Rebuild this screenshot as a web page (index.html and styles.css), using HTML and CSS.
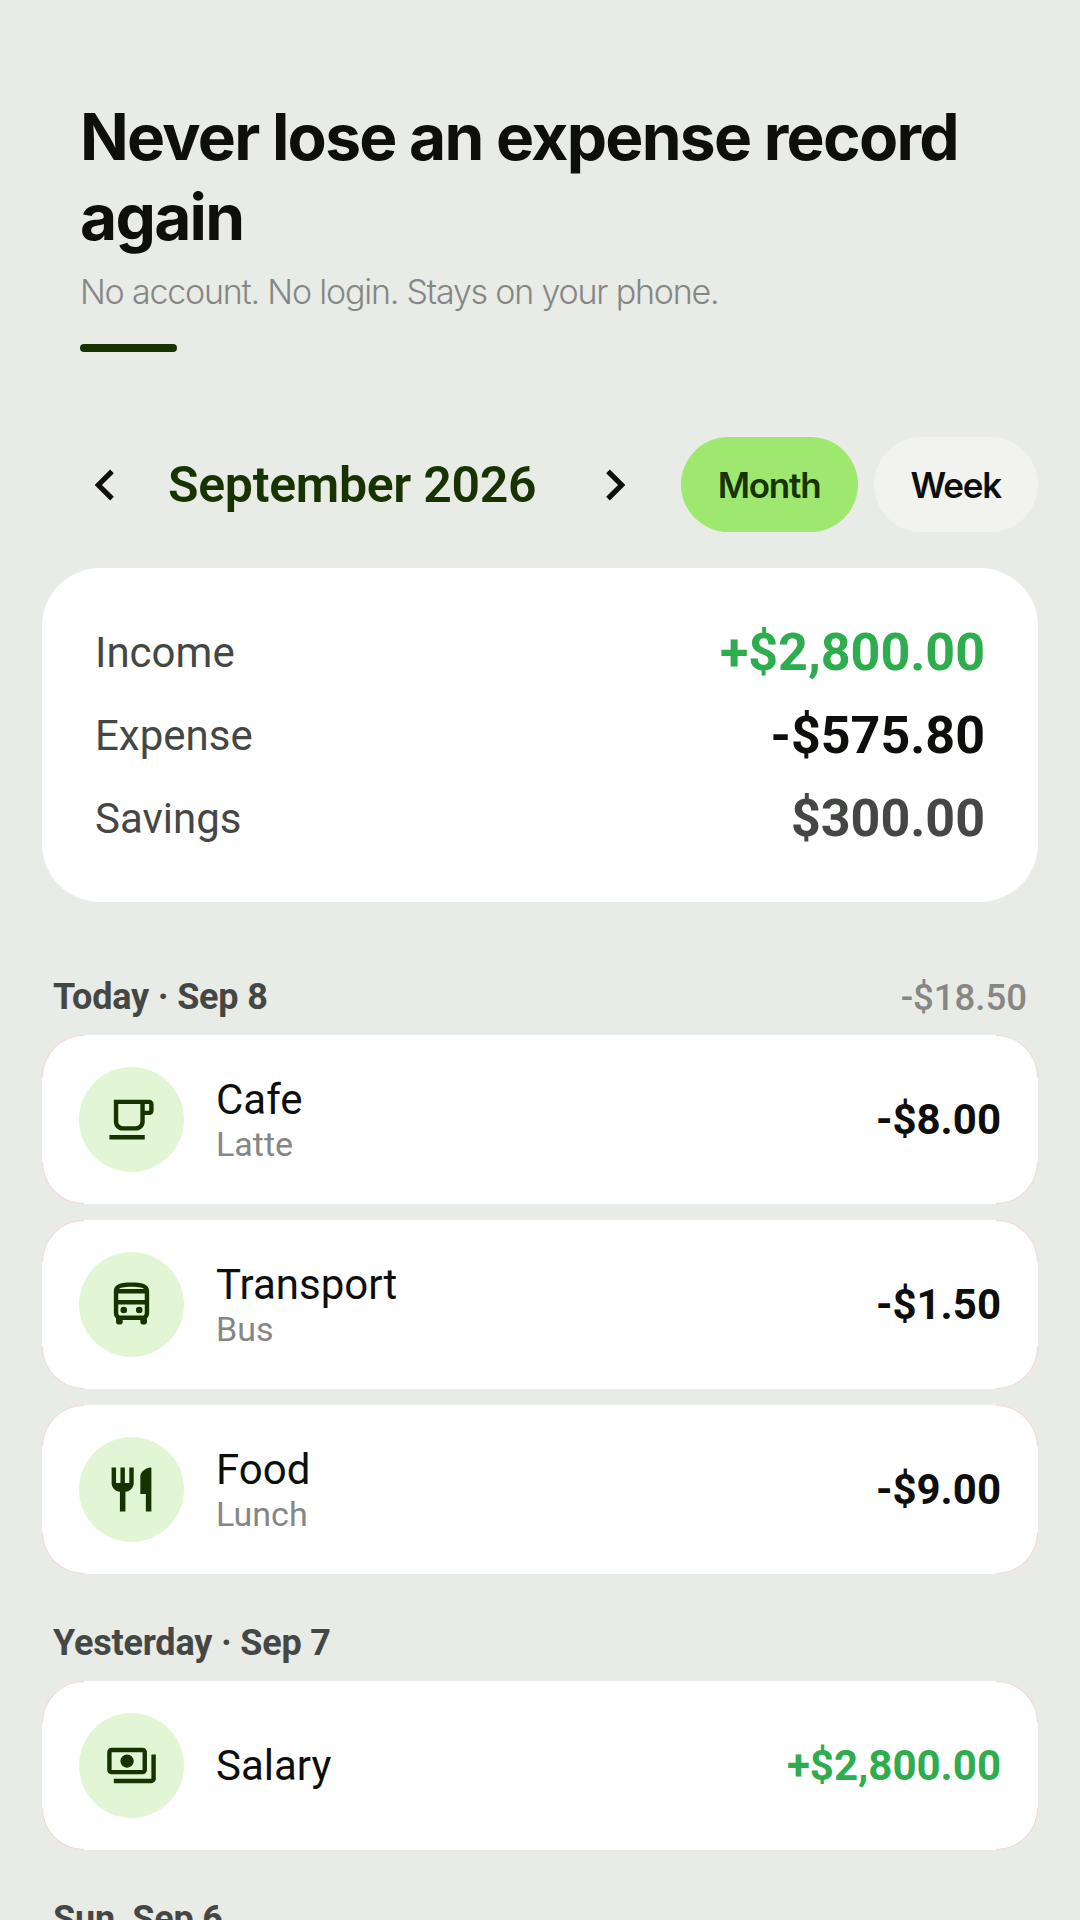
FILE: index.html
```html
<!DOCTYPE html>
<html>
<head>
    <meta charset="UTF-8">
    <title>Expenses</title>
    <link rel="stylesheet" href="styles.css">
</head>
<body>

<div class="app">
    <div class="hero">
        <h1 class="hero-title">Never lose an expense record again</h1>
        <p class="hero-sub">No account. No login. Stays on your phone.</p>
        <div class="hero-bar"></div>
    </div>

    <div class="period">
        <button class="nav-btn">
            <svg viewBox="0 0 24 24"><path d="M15.41 7.41L14 6l-6 6 6 6 1.41-1.41L10.83 12z"/></svg>
        </button>
        <span class="period-name">September 2026</span>
        <button class="nav-btn">
            <svg viewBox="0 0 24 24"><path d="M10 6L8.59 7.41 13.17 12l-4.58 4.59L10 18l6-6z"/></svg>
        </button>
        <div class="pills">
            <span class="pill on">Month</span>
            <span class="pill">Week</span>
        </div>
    </div>

    <div class="summary">
        <div class="summary-row">
            <span class="summary-label">Income</span>
            <span class="summary-value plus">+$2,800.00</span>
        </div>
        <div class="summary-row">
            <span class="summary-label">Expense</span>
            <span class="summary-value">-$575.80</span>
        </div>
        <div class="summary-row">
            <span class="summary-label">Savings</span>
            <span class="summary-value grey">$300.00</span>
        </div>
    </div>

    <div class="day first">
        <span class="day-name">Today · Sep 8</span>
        <span class="day-total">-$18.50</span>
    </div>
    <div class="list">
        <div class="item">
            <div class="item-icon">
                <svg viewBox="0 0 24 24"><path d="M20 3H4v10c0 2.21 1.79 4 4 4h6c2.21 0 4-1.79 4-4v-3h2c1.11 0 2-.89 2-2V5c0-1.11-.89-2-2-2zm-4 10c0 1.1-.9 2-2 2H8c-1.1 0-2-.9-2-2V5h10v8zm4-5h-2V5h2v3zM2 19h16v2H2z"/></svg>
            </div>
            <div class="item-text">
                <span class="item-title">Cafe</span>
                <span class="item-note">Latte</span>
            </div>
            <span class="item-amount">-$8.00</span>
        </div>
        <div class="item">
            <div class="item-icon">
                <svg viewBox="0 0 24 24"><path d="M12 2c-4.42 0-8 .5-8 4v10c0 .88.39 1.67 1 2.22V20c0 .55.45 1 1 1h1c.55 0 1-.45 1-1v-1h8v1c0 .55.45 1 1 1h1c.55 0 1-.45 1-1v-1.78c.61-.55 1-1.34 1-2.22V6c0-3.5-3.58-4-8-4zm5.66 2.99H6.34C6.89 4.46 8.31 4 12 4s5.11.46 5.66.99zm.34 2V10H6V6.99h12zm-.34 9.74l-.29.27H6.63l-.29-.27C6.21 16.62 6 16.37 6 16v-4h12v4c0 .37-.21.62-.34.73z"/><circle cx="8.5" cy="14.5" r="1.5"/><circle cx="15.5" cy="14.5" r="1.5"/></svg>
            </div>
            <div class="item-text">
                <span class="item-title">Transport</span>
                <span class="item-note">Bus</span>
            </div>
            <span class="item-amount">-$1.50</span>
        </div>
        <div class="item">
            <div class="item-icon">
                <svg viewBox="0 0 24 24"><path d="M11 9H9V2H7v7H5V2H3v7c0 2.12 1.66 3.84 3.75 3.97V22h2.5v-9.03C11.34 12.84 13 11.12 13 9V2h-2v7zm5-3v8h2.5v8H21V2c-2.76 0-5 2.24-5 4z"/></svg>
            </div>
            <div class="item-text">
                <span class="item-title">Food</span>
                <span class="item-note">Lunch</span>
            </div>
            <span class="item-amount">-$9.00</span>
        </div>
    </div>

    <div class="day">
        <span class="day-name">Yesterday · Sep 7</span>
    </div>
    <div class="list">
        <div class="item">
            <div class="item-icon">
                <svg viewBox="0 0 24 24"><path d="M19 14V6c0-1.1-.9-2-2-2H3c-1.1 0-2 .9-2 2v8c0 1.1.9 2 2 2h14c1.1 0 2-.9 2-2zm-2 0H3V6h14v8zm-7-7c-1.66 0-3 1.34-3 3s1.34 3 3 3 3-1.34 3-3-1.34-3-3-3zm13 0v11c0 1.1-.9 2-2 2H4v-2h17V7h2z"/></svg>
            </div>
            <div class="item-text">
                <span class="item-title">Salary</span>
            </div>
            <span class="item-amount plus">+$2,800.00</span>
        </div>
    </div>

    <div class="day">
        <span class="day-name">Sun, Sep 6</span>
    </div>
</div>

</body>
</html>
```

FILE: styles.css
```css
* { margin: 0; padding: 0; box-sizing: border-box; }
html, body { height: 1920px; overflow: hidden; }
body { background: #e8ebe6; font-family: Roboto, "Noto Sans", sans-serif; }
.app { height: 1920px; overflow: hidden; padding: 0 42px; }

.hero { padding: 97px 38px 0; }
.hero-title { font-family: Inter, sans-serif; font-size: 64px; font-weight: 700; line-height: 80px; letter-spacing: -1.72px; color: #0e0f0c; }
.hero-sub { font-family: Inter, sans-serif; font-size: 34px; font-weight: 300; line-height: 46px; letter-spacing: -1.2px; color: #868685; margin-top: 12px; }
.hero-bar { width: 97px; height: 8px; margin-top: 29px; border-radius: 4px; background: #163300; }

.period { display: flex; align-items: center; margin-top: 85px; height: 95px; }
.nav-btn { width: 126px; height: 95px; border: 0; background: none; display: flex; align-items: center; justify-content: center; flex: none; }
.nav-btn svg { width: 62px; height: 62px; fill: #0e0f0c; flex: none; }
.period-name { font-size: 50px; font-weight: 600; color: #163300; flex: none; width: 384px; letter-spacing: -0.3px; }
.pills { display: flex; gap: 16px; margin-left: auto; }
.pill { height: 95px; padding: 0 37px; border-radius: 48px; background: #f2f3ef; display: flex; align-items: center; font-family: Inter, sans-serif; font-size: 35px; font-weight: 600; letter-spacing: -1.2px; color: #0e0f0c; }
.pill.on { background: #9fe870; color: #163300; }

.summary { margin-top: 36px; height: 334px; padding: 0 53px; border-radius: 58px; background: #fff; display: flex; flex-direction: column; justify-content: center; }
.summary-row { display: flex; justify-content: space-between; align-items: center; height: 83px; }
.summary-label { font-size: 42px; color: #454745; }
.summary-value { font-size: 52px; font-weight: 700; color: #0e0f0c; }
.summary-value.plus { color: #2ead4e; }
.summary-value.grey { color: #454745; }

.day { display: flex; justify-content: space-between; align-items: center; padding: 0 11px; height: 46px; margin-top: 46px; margin-bottom: 15px; }
.day.first { margin-top: 72px; }
.day-name { font-size: 36px; font-weight: 700; letter-spacing: -0.2px; color: #454745; }
.day-total { font-size: 36.5px; font-weight: 500; color: #868685; }

.list { display: flex; flex-direction: column; gap: 16px; }
/* pink hairline on the rounded corners only, straight edges stay white */
.item {
    height: 169px;
    padding: 0 36px;
    border: 1px solid transparent;
    border-radius: 42px;
    background:
        linear-gradient(#fff, #fff) center / 100% 85px no-repeat border-box,
        linear-gradient(#fff, #fff) center / calc(100% - 84px) 100% no-repeat border-box,
        linear-gradient(#fff, #fff) padding-box,
        linear-gradient(#f4d8d8, #f4d8d8) border-box;
    display: flex;
    align-items: center;
}
.item-icon { width: 105px; height: 105px; border-radius: 50%; background: #e2f6d5; flex: none; display: flex; align-items: center; justify-content: center; }
.item-icon svg { width: 53px; height: 53px; fill: #163300; }
.item-text { margin-left: 32px; display: flex; flex-direction: column; flex: 1; }
.item-title { font-size: 42px; line-height: 48px; color: #0e0f0c; }
.item-note { font-size: 34px; line-height: 40px; color: #868685; }
.item-amount { font-size: 42px; font-weight: 700; color: #0e0f0c; }
.item-amount.plus { color: #2ead4e; }
```
